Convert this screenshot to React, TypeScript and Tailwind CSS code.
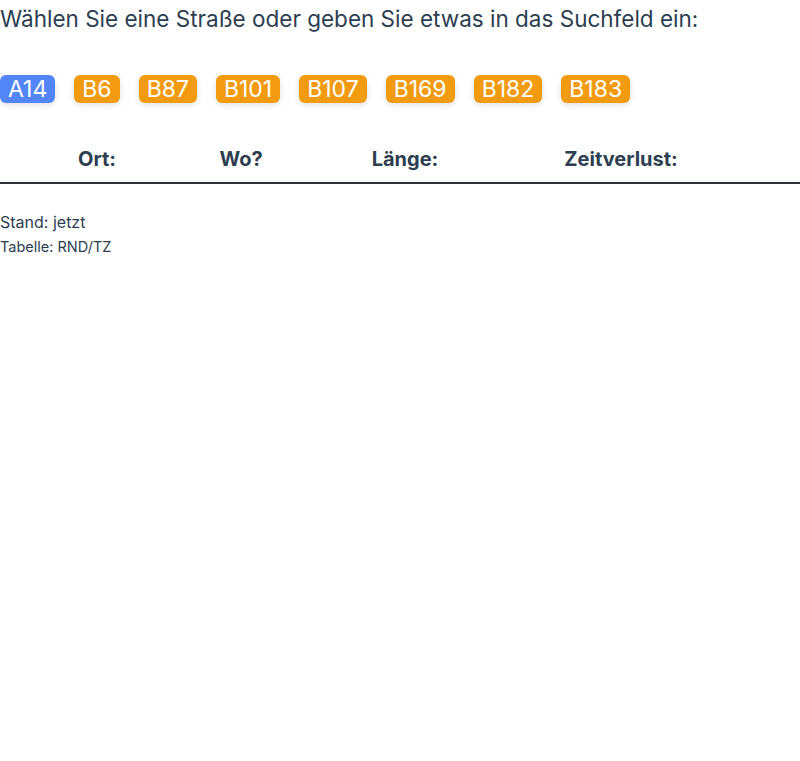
const roads = ["A14", "B6", "B87", "B101", "B107", "B169", "B182", "B183"];

export default function App() {
  return (
    <div className="min-h-[761px] bg-white font-['Inter',sans-serif] text-[#2c3e50]">
      <p className="pt-[2px] text-[22.5px] leading-[34px]">
        Wählen Sie eine Straße oder geben Sie etwas in das Suchfeld ein:
      </p>

      <div className="mt-[39px] flex gap-[19px]">
        {roads.map((r, i) => (
          <span
            key={r}
            className={
              "rounded-[6px] px-[8px] text-[23px] leading-[28px] text-white shadow-[0_2px_6px_rgba(0,0,0,0.12)] " +
              (i === 0 ? "bg-[#5285f7]" : "bg-[#f29b11]")
            }
          >
            {r}
          </span>
        ))}
      </div>

      <div className="mt-[42px] grid grid-cols-[194px_94px_234px_198px_1fr] border-b-2 border-[#2f3338] pb-[9px] text-center text-[20px] leading-[28px] font-bold">
        <div>Ort:</div>
        <div>Wo?</div>
        <div>Länge:</div>
        <div>Zeitverlust:</div>
        <div />
      </div>

      <p className="mt-[26px] text-[16px] leading-[24px]">Stand: jetzt</p>
      <p className="mt-[2px] text-[14.5px] leading-[22px]">Tabelle: RND/TZ</p>
    </div>
  );
}
